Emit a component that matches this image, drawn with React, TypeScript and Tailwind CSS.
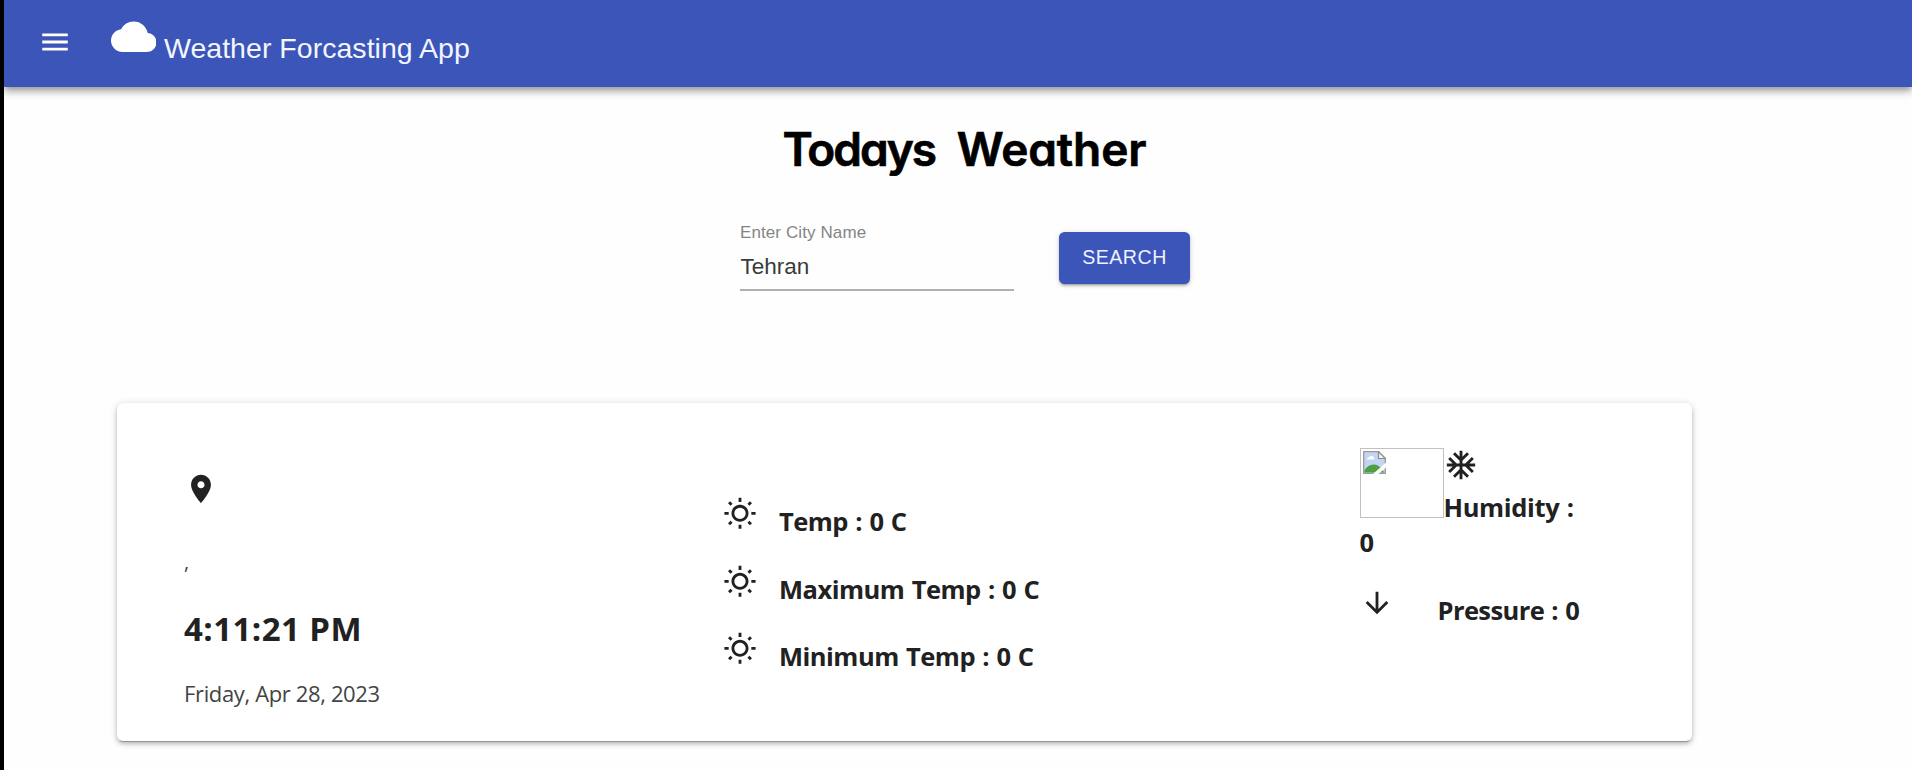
import type { ReactNode } from "react";

function Icon({ className, children }: { className: string; children: ReactNode }) {
  return (
    <svg viewBox="0 0 24 24" fill="currentColor" className={"block shrink-0 " + className} aria-hidden="true">
      {children}
    </svg>
  );
}

const MenuIcon = () => (
  <Icon className="size-[34px]">
    <path d="M3 18h18v-2H3v2zm0-5h18v-2H3v2zm0-7v2h18V6H3z" />
  </Icon>
);

const CloudIcon = () => (
  <Icon className="size-[45.5px]">
    <path d="M19.35 10.04C18.67 6.59 15.64 4 12 4 9.11 4 6.6 5.64 5.35 8.04 2.34 8.36 0 10.91 0 14c0 3.31 2.69 6 6 6h13c2.76 0 5-2.24 5-5 0-2.64-2.05-4.78-4.65-4.96z" />
  </Icon>
);

const PinIcon = () => (
  <Icon className="size-[34px]">
    <path d="M12 2C8.13 2 5 5.13 5 9c0 5.25 7 13 7 13s7-7.75 7-13c0-3.87-3.13-7-7-7zm0 9.5c-1.38 0-2.5-1.12-2.5-2.5s1.12-2.5 2.5-2.5 2.5 1.12 2.5 2.5-1.12 2.5-2.5 2.5z" />
  </Icon>
);

const SunIcon = () => (
  <Icon className="size-[34px]">
    <path d="M6.76 4.84l-1.8-1.79-1.41 1.41 1.79 1.79 1.42-1.41zM4 10.5H1v2h3v-2zm9-9.95h-2V3.5h2V.55zm7.45 3.91l-1.41-1.41-1.79 1.79 1.41 1.41 1.79-1.79zm-3.21 13.7l1.79 1.8 1.41-1.41-1.8-1.79-1.4 1.4zM20 10.5v2h3v-2h-3zm-8-5c-3.31 0-6 2.69-6 6s2.69 6 6 6 6-2.69 6-6-2.69-6-6-6zm0 10c-2.21 0-4-1.79-4-4s1.79-4 4-4 4 1.79 4 4-1.79 4-4 4zm-1 6.95h2V19.5h-2v2.95zm-7.45-3.91l1.41 1.41 1.79-1.8-1.41-1.41-1.79 1.8z" />
  </Icon>
);

const SnowIcon = () => (
  <Icon className="size-[34px]">
    <path d="M22 11h-4.17l3.24-3.24-1.41-1.42L15 11h-2V9l4.66-4.66-1.42-1.41L13 6.17V2h-2v4.17L7.76 2.93 6.34 4.34 11 9v2H9L4.34 6.34 2.93 7.76 6.17 11H2v2h4.17l-3.24 3.24 1.41 1.42L9 13h2v2l-4.66 4.66 1.42 1.41L11 17.83V22h2v-4.17l3.24 3.24 1.42-1.41L13 15v-2h2l4.66 4.66 1.41-1.42L17.83 13H22z" />
  </Icon>
);

const DownIcon = () => (
  <Icon className="size-[34px]">
    <path d="M20 12l-1.41-1.41L13 16.17V4h-2v12.17l-5.58-5.59L4 12l8 8 8-8z" />
  </Icon>
);

function MissingImage() {
  return (
    <div className="h-[70px] w-[84px] shrink-0 border border-[#c0c0c0] pt-[2px] pl-[2px]">
      <svg viewBox="0 0 23 23" className="block size-[23px]" aria-hidden="true">
        <path d="M.7.7H15.5L22.3 7.5V22.3H.7z" fill="#c3d5f3" stroke="#9a9a9a" strokeWidth="1.3" />
        <path d="M4 8.5a2.2 2.2 0 0 1 2-2.3 2.8 2.8 0 0 1 5 .6 1.7 1.7 0 0 1 0 1.7H4z" fill="#fff" />
        <path d="M1.4 21.6v-2c2-3.6 5-6 9-6 4 0 7 2 8.5 5l2.5 3z" fill="#4f9f43" />
        <path d="M15.5 .7V7.5h6.8z" fill="#f4f4f4" stroke="#8c8c8c" strokeWidth="1.2" />
        <path d="M23 11.5L10 23h5.5L23 16.5z" fill="#fefefe" />
      </svg>
    </div>
  );
}

const readings = ["Temp : 0 C", "Maximum Temp : 0 C", "Minimum Temp : 0 C"];

export default function App() {
  return (
    <div className="flex h-[770px] w-full overflow-hidden bg-[#fefefe] font-['Liberation_Sans',Arial,sans-serif] text-[#212121]">
      <div className="w-1 shrink-0 bg-black" />
      <div className="flex min-w-0 flex-1 flex-col">
        <header className="flex h-[86.5px] shrink-0 items-start bg-[#3c55b9] pl-[33.5px] text-white shadow-[0_3px_6px_-1px_rgba(0,0,0,0.28),0_6px_7px_0_rgba(0,0,0,0.14),0_1px_14px_0_rgba(0,0,0,0.12)]">
          <button className="mt-[24.5px]" aria-label="menu">
            <MenuIcon />
          </button>
          <div className="mt-[13.5px] ml-[39px]">
            <CloudIcon />
          </div>
          <span className="mt-7 ml-2 text-[28.5px] leading-[40px] tracking-[0.03px] whitespace-nowrap text-[#f3f5ff]">
            Weather Forcasting App
          </span>
        </header>

        <h1 className="mt-[27.5px] ml-[778.5px] h-[69.5px] font-['Inter',sans-serif] text-[46px] leading-[71px] font-semibold whitespace-nowrap text-black [-webkit-text-stroke:0.7px_black] [font-feature-settings:'cv11']">
          <span className="tracking-[-2px]">Todays</span>
          <span className="tracking-[10px]"> </span>
          <span className="tracking-[-0.1px]">Weather</span>
        </h1>

        <div className="mt-[39px] ml-[736px] flex h-[68px] items-start">
          <div className="w-[274px]">
            <label className="block h-5 text-[17px] leading-5 tracking-[0.1px] text-[#858585]">Enter City Name</label>
            <div className="h-[48px] border-b-2 border-[#b0b0b0] pt-[9.5px] pl-[0.5px] text-[22.5px] leading-[30px] text-[#3a3a3a]">
              Tehran
            </div>
          </div>
          <button className="mt-[9px] ml-[45px] h-[52px] w-[131px] rounded-[5.5px] bg-[#3c55b9] pb-0.5 text-[19.6px] leading-[50px] tracking-[0.5px] text-[#eef1ff] shadow-[0_4px_2px_-3px_rgba(0,0,0,0.2),0_2px_3px_0_rgba(0,0,0,0.16),0_1px_6px_0_rgba(0,0,0,0.12)]">
            SEARCH
          </button>
        </div>

        <section className="mt-[112px] ml-[112.5px] flex h-[338px] w-[1575.5px] shrink-0 rounded-[6px] bg-white font-['Open_Sans','Noto_Sans',sans-serif] shadow-[0_3px_1px_-2px_rgba(0,0,0,0.25),0_3px_4px_0_rgba(0,0,0,0.2),0_1px_8px_0_rgba(0,0,0,0.14)]">
          <div className="flex w-[606px] flex-col pt-[69px] pl-[67px]">
            <PinIcon />
            <p className="mt-[41px] ml-[0.5px] text-[20px] leading-[30px] text-[#444]">,</p>
            <p className="mt-[29px] ml-[0.5px] text-[33px] leading-[45px] font-bold tracking-[0.45px] whitespace-nowrap">4:11:21 PM</p>
            <p className="mt-[27px] ml-[0.5px] text-[22px] leading-[30px] tracking-[-0.36px] whitespace-nowrap text-[#444]">
              Friday, Apr 28, 2023
            </p>
          </div>

          <div className="flex w-[637px] flex-col pt-[94.5px]">
            {readings.map((text) => (
              <div key={text} className="flex h-[67.5px] items-start gap-[22.5px]">
                <SunIcon />
                <span className="mt-1 text-[25.5px] leading-[40px] font-bold tracking-[-0.5px] whitespace-nowrap [word-spacing:1.2px]">{text}</span>
              </div>
            ))}
          </div>

          <div className="flex flex-col pt-[45.5px] text-[25.5px] leading-[34px] font-bold whitespace-nowrap">
            <div className="flex">
              <MissingImage />
              <div className="flex flex-col">
                <SnowIcon />
                <span className="mt-2 tracking-[-0.35px] [word-spacing:1.2px]">Humidity :</span>
              </div>
            </div>
            <p className="mt-px">0</p>
            <div className="mt-[27px] flex items-start gap-[44px]">
              <DownIcon />
              <span className="mt-[6.5px] tracking-[-0.6px] [word-spacing:1.2px]">Pressure : 0</span>
            </div>
          </div>
        </section>
      </div>
    </div>
  );
}
